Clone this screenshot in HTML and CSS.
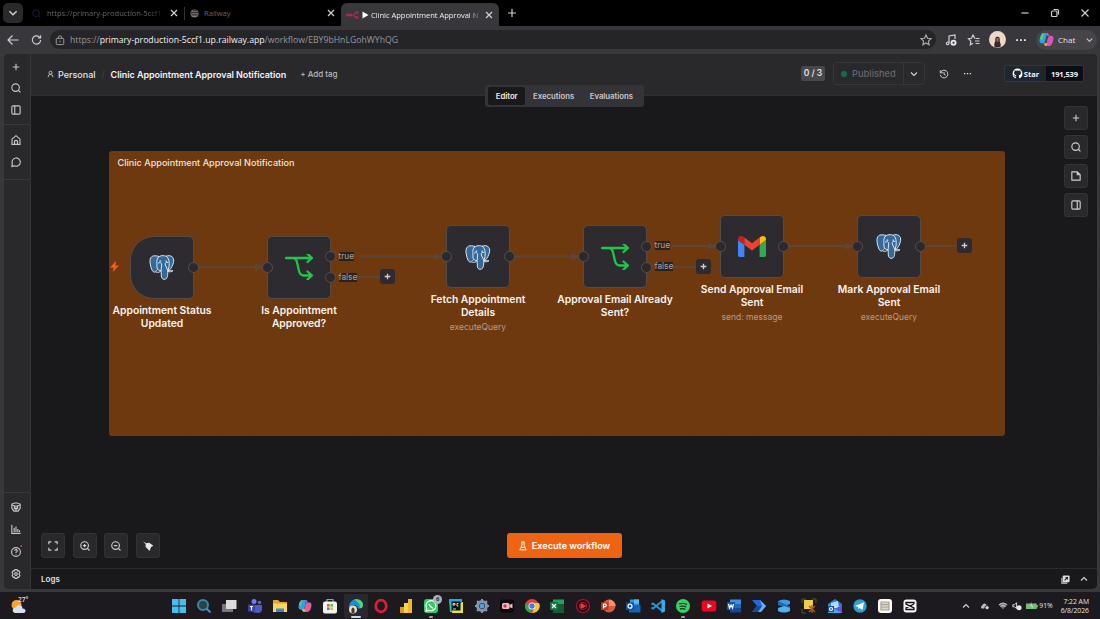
FILE: index.html
```
<!DOCTYPE html>
<html lang="en">
<head>
    <meta charset="UTF-8">
    <meta name="viewport" content="width=device-width, initial-scale=1.0">
    <title>Clinic Appointment Approval Notification</title>
    <link rel="stylesheet" href="styles.css">
</head>
<body>
    <svg class="defs" aria-hidden="true">
        <symbol id="close" viewBox="0 0 10 10"><path d="M2 2l6 6M8 2l-6 6"/></symbol>
        <symbol id="plus" viewBox="0 0 10 10"><path d="M5 1v8M1 5h8"/></symbol>
        <symbol id="down" viewBox="0 0 10 10"><path d="M2 3.5l3 3 3-3"/></symbol>
        <symbol id="search" viewBox="0 0 12 12"><circle cx="5.5" cy="5.5" r="4.500"/><path d="M8.700 8.700l2.600 2.600"/></symbol>
        <symbol id="panel" viewBox="0 0 12 12"><rect x="1" y="1" width="10" height="10" rx="1.5"/><path d="M4.5 1v10"/></symbol>
        <symbol id="dots" viewBox="0 0 12 12"><path class="solid" d="M1.2 5.2h1.8v1.7H1.2zM5.1 5.2h1.8v1.7H5.1zM9 5.2h1.8v1.7H9z"/></symbol>
        <symbol id="postgres" viewBox="0 0 26 26">
            <g fill="#35699b" stroke="#dbe5ec" stroke-width="1" stroke-linejoin="round" stroke-linecap="round">
                <path d="M8 2C3 .8.6 3.500 1 8c.3 3.600 1.500 8.300 3.300 9.800 1.600 1.300 3.300-1.200 4.700-2.800l2-12z"/>
                <path d="M17 2.200C22 .3 25.300 3.300 24.600 7.500c-.6 3.600-2.400 7-4.600 9l-4-1z"/>
                <path d="M9.500 3C12 1 17 1 18.800 3.800c1.800 2.800 2 8.200.3 12.200-.7 3.500.2 8-2.700 9.100-2.300.8-3.900-.4-4.100-3.200l-.2-5.300c-2.700.3-4.400-1.500-4.200-4.600C8 9 7 5.500 9.500 3z"/>
                <path fill="none" d="M9.300 9c2-1 3.500-.2 3.400 2l-.6 5.600c-1 1.800-3 2-5.100 1.500M19 8.500c-1.800-.8-3.200.2-2.700 2.500l2.600 5.500M18.600 17.300c2 .9 4 .7 5.400-.6-1.400.2-3 .1-4.400-.7"/>
                <path stroke-width="1.200" d="M11 7.200h.7M17 7.200h.5"/>
            </g>
        </symbol>
        <symbol id="branch" viewBox="0 0 28 26"><path d="M1 4h26M22.500 0l4.500 4-4.500 4M7.500 4c3.500 0 4.300 2.500 5.200 7C13.800 17 14.500 21.500 19 21.500h8M22.500 17.500l4.500 4-4.500 4"/></symbol>
    </svg>

    <div class="tabs">
        <button class="tab-menu"><svg><use href="#down"/></svg></button>
        <div class="tab tab-first">
            <svg class="favicon search-blue"><use href="#search"/></svg>
            <span class="tab-title">https://primary-production-5ccf1.</span>
            <svg class="close"><use href="#close"/></svg>
        </div>
        <div class="tab tab-second">
            <svg class="favicon" viewBox="0 0 10 10"><circle cx="5" cy="5" r="4.500" fill="#77777a" stroke="none"/><path d="M1 4h8M1.500 6.500h7M3 2h5" stroke="#333"/></svg>
            <span class="tab-title">Railway</span>
            <svg class="close"><use href="#close"/></svg>
        </div>
        <div class="tab tab-active">
            <svg class="favicon n8n" viewBox="0 0 13 10"><path d="M1 5h6c2 0 1-2.500 3-2.500M7 5c2 0 1 2.500 3 2.500"/><circle cx="1.600" cy="5" r="1"/><circle cx="4.600" cy="5" r="1"/><circle cx="11" cy="2.500" r="1"/><circle cx="11" cy="7.500" r="1"/></svg>
            <svg class="play" viewBox="0 0 7 8"><path d="M.5.5v7L6.500 4z"/></svg>
            <span class="tab-title">Clinic Appointment Approval N</span>
            <svg class="close"><use href="#close"/></svg>
        </div>
        <svg class="new-tab"><use href="#plus"/></svg>
        <div class="window-buttons">
            <svg viewBox="0 0 10 10"><path d="M1.500 5h7"/></svg>
            <svg viewBox="0 0 10 10"><rect x="1.500" y="3" width="5.500" height="5.500" rx="1"/><path d="M3.500 1.500h3.700q1.300 0 1.300 1.300v3.700"/></svg>
            <svg viewBox="0 0 10 10"><path d="M1.500 1.500l7 7M8.500 1.500l-7 7"/></svg>
        </div>
    </div>

    <div class="toolbar">
        <svg class="back" viewBox="0 0 12 12"><path d="M11.500 6H1M5.500 1.500L1 6l4.500 4.500"/></svg>
        <svg class="reload" viewBox="0 0 12 12"><path d="M10.500 6a4.500 4.500 0 1 1-1.500-3.400l1.300 1.200M10.500.8v3H7.500"/></svg>
        <div class="address">
            <svg class="lock" viewBox="0 0 12 12"><rect x="1.500" y="4" width="9" height="7.500" rx="1"/><path d="M4 4V2.500q0-1.500 2-1.500t2 1.500V4M6 6.800v2"/></svg>
            <span class="url">https://<b>primary-production-5ccf1.up.railway.app</b>/workflow/EBY9bHnLGohWYhQG</span>
            <svg class="star" viewBox="0 0 12 12"><path d="M6 1l1.500 3.300 3.500.4-2.600 2.400.7 3.600L6 8.900l-3.100 1.800.7-3.600L1 4.700l3.500-.4z"/></svg>
        </div>
        <svg class="tool media" viewBox="0 0 12 12"><path d="M4 9V2l6-1v4"/><circle cx="2.700" cy="9.300" r="1.300"/><circle cx="8.500" cy="8.700" r="3" class="solid"/><path stroke="#38373b" d="M7.500 8.700h2M8.500 7.700v2"/></svg>
        <svg class="tool" viewBox="0 0 12 12"><path d="M7.500 4.500L6.800 4.300 5 1 3.500 4.300.5 4.700l2.300 2.400-.5 3.700L5 9.200M8 4.500h3.500M7 7h4.500M7.500 9.500h4"/></svg>
        <svg class="avatar" viewBox="0 0 17 17"><circle cx="8.500" cy="8.500" r="8.500" fill="#ead9c6"/><path fill="#3b2826" d="M5.500 16c-.5-3 0-4.500.8-6V7.500c.2-2.500 4.400-2.500 4.400 0v2c0 2 1.500 3.500 1 6q-3 1.800-6.200.5z"/><path fill="#a76a52" d="M7.500 7h2v3.500h-2z"/></svg>
        <svg class="tool"><use href="#dots"/></svg>
        <div class="chat">
            <svg class="copilot" viewBox="0 0 16 16"><path fill="#23a6e8" d="M5.500 1h4C8 2 7.500 6 6.500 9.500S4.500 12 3 12C0 12 0 9 1.500 5S4 1 5.500 1z"/><path fill="#57cf78" d="M1 7c1-3 2-6 4.500-6L3.500 9z"/><path fill="#df53b8" d="M10.500 15h-4c1.500-1 2-5 3-8.500S11.500 4 13 4c3 0 3 3 1.500 7S12 15 10.500 15z"/><path fill="#f3a351" d="M5 12h4l-1 3c-2 0-2.500-1.500-3-3z"/><path fill="#9c67ef" d="M8.500 1c2 0 2 1.500 2.500 3h-3z"/></svg>
            <span>Chat</span>
            <svg class="chat-arrow"><use href="#down"/></svg>
        </div>
    </div>

    <div class="page">
        <aside class="sidebar">
            <div class="side-group">
                <svg class="side-plus"><use href="#plus"/></svg>
                <svg><use href="#search"/></svg>
                <svg><use href="#panel"/></svg>
            </div>
            <div class="side-group side-nav">
                <svg viewBox="0 0 12 12"><path d="M1.200 5L6 .8 10.800 5v6.200H1.200zM4.200 11.200V7.500q1.800-2 3.600 0v3.700"/></svg>
                <svg viewBox="0 0 12 12"><path d="M1 11.300l.6-3.300a5 5 0 1 1 2.400 2.600z"/></svg>
            </div>
            <div class="side-group side-bottom">
                <svg viewBox="0 0 12 12"><path d="M1 2.500L6 1l5 1.500v5.200L8.500 11h-5L1 7.700zM1 3.500L6 5l5-1.500M4 5v3h4V5M6 5v6"/></svg>
                <svg viewBox="0 0 12 12"><path d="M1 .8v10.500h10.500M3.800 4.500v5M6 3v6.500M8.200 6v3.500M10.200 7.500v2"/></svg>
                <svg viewBox="0 0 12 12"><circle cx="6" cy="6" r="5.300"/><path d="M4.500 4.700Q4.700 3 6.200 3.200 8 3.700 7.300 5.200L6 6.300v.8M6 8.700v.5"/><circle cx="12.300" cy="-1" r="1" fill="#e34b5c" stroke="none"/></svg>
                <svg viewBox="0 0 12 12"><path d="M4.800.7h2.400l.5 1.600 1.600-.3 1.400 2.200L9.600 6l1.100 1.800L9.300 10l-1.600-.3-.5 1.600H4.800l-.5-1.600-1.600.3-1.400-2.200L2.400 6 1.300 4.200 2.700 2l1.600.3z"/><circle cx="6" cy="6" r="1.600"/></svg>
            </div>
        </aside>

        <main>
            <header>
                <svg class="person" viewBox="0 0 10 10"><circle cx="5" cy="3.200" r="2.200"/><path d="M1.500 9.500q0-4 3.500-4t3.500 4"/></svg>
                <span class="project">Personal</span>
                <span class="slash">/</span>
                <span class="workflow-name">Clinic Appointment Approval Notification</span>
                <span class="add-tag">+ Add tag</span>
                <span class="count">0 / 3</span>
                <div class="publish">
                    <span class="published"><i></i>Published</span>
                    <svg><use href="#down"/></svg>
                </div>
                <svg class="history" viewBox="0 0 12 12"><path d="M1.500 1.500v3h3M1.800 4.200A4.600 4.600 0 1 1 1.500 7M6 3.500v3l2 .8"/></svg>
                <svg class="more"><use href="#dots"/></svg>
                <div class="github">
                    <span class="gh-star"><svg viewBox="0 0 16 16"><path d="M8 .7A7.400 7.400 0 0 0 5.700 15v-2.300c-2 .4-2.500-1-2.900-1.800l-.8-.7c.9-.3 1.600.7 1.900 1.100.6.900 1.500.6 1.900.4l.4-1C4.300 10.300 3 9.300 3 7c0-.8.3-1.500.8-2-.1-.7-.1-1.300.1-1.900.8 0 1.500.5 2 .8a8 8 0 0 1 4.200 0c.6-.4 1.200-.8 2-.8.2.6.3 1.200.1 1.900.5.500.8 1.200.8 2 0 2.300-1.300 3.300-3.200 3.700.4.400.5.900.5 1.700V15A7.400 7.400 0 0 0 8 .7z"/></svg>Star</span>
                    <span class="gh-count">191,539</span>
                </div>
            </header>

            <nav class="view-tabs">
                <span class="selected">Editor</span>
                <span>Executions</span>
                <span>Evaluations</span>
            </nav>

            <section class="canvas">
                <div class="sticky">Clinic Appointment Approval Notification</div>

                <svg class="wires" viewBox="30 96 1067 472">
                    <path d="M198 267h66M359 256.500h83M358 277h23M514 256.500h65M672 246h45M674 267h23M788 246h65M925 246h33"/>
                    <path class="arrow" d="M255 263.500l9 3.500-9 3.500zM434 253l9 3.500-9 3.500zM571 253l9 3.500-9 3.500zM708 242.500l9 3.500-9 3.500zM845 242.500l9 3.500-9 3.500z"/>
                </svg>

                <svg class="bolt" viewBox="0 0 10 12"><path d="M6.500 0L0 7h4l-1 5 7-7H6z"/></svg>

                <div class="node trigger n1">
                    <div class="box"><svg class="pg"><use href="#postgres"/></svg><i class="port out"></i></div>
                    <p>Appointment Status<br>Updated</p>
                </div>
                <div class="node n2">
                    <div class="box"><svg class="if"><use href="#branch"/></svg><i class="port in"></i><i class="port yes"></i><i class="port no"></i><span class="tag yes">true</span><span class="tag no">false</span></div>
                    <p>Is Appointment<br>Approved?</p>
                </div>
                <div class="node n3">
                    <div class="box"><svg class="pg"><use href="#postgres"/></svg><i class="port in"></i><i class="port out"></i></div>
                    <p>Fetch Appointment<br>Details</p>
                    <small>executeQuery</small>
                </div>
                <div class="node n4">
                    <div class="box"><svg class="if"><use href="#branch"/></svg><i class="port in"></i><i class="port yes"></i><i class="port no"></i><span class="tag yes">true</span><span class="tag no">false</span></div>
                    <p>Approval Email Already<br>Sent?</p>
                </div>
                <div class="node n5">
                    <div class="box">
                        <svg class="gmail" viewBox="0 0 28 21"><path fill="#4285f4" d="M0 4l6.400 4.800V21H2q-2 0-2-2z"/><path fill="#34a853" d="M28 4l-6.400 4.800V21H26q2 0 2-2z"/><path fill="#c5221f" d="M0 3c0-3 3.200-3.800 5.200-2.300l1.200.9v7.200L0 4z"/><path fill="#fbbc04" d="M28 3c0-3-3.200-3.800-5.200-2.300l-1.200.9v7.200L28 4z"/><path fill="#ea4335" d="M6.400 8.800V1.600L14 7.300l7.600-5.700v7.200L14 14.500z"/></svg>
                        <i class="port in"></i><i class="port out"></i>
                    </div>
                    <p>Send Approval Email<br>Sent</p>
                    <small>send: message</small>
                </div>
                <div class="node n6">
                    <div class="box"><svg class="pg"><use href="#postgres"/></svg><i class="port in"></i><i class="port out"></i></div>
                    <p>Mark Approval Email<br>Sent</p>
                    <small>executeQuery</small>
                </div>

                <span class="add add1"><svg><use href="#plus"/></svg></span>
                <span class="add add2"><svg><use href="#plus"/></svg></span>
                <span class="add add3"><svg><use href="#plus"/></svg></span>

                <div class="canvas-tools">
                    <button><svg class="small"><use href="#plus"/></svg></button>
                    <button><svg><use href="#search"/></svg></button>
                    <button><svg viewBox="0 0 12 12"><path d="M1 1h6.500L11 4.500V11H1zM7.500 1v3.500H11"/></svg></button>
                    <button><svg class="flip"><use href="#panel"/></svg></button>
                </div>

                <div class="zoom-tools">
                    <button><svg viewBox="0 0 12 12"><path d="M1 4V1h3M8 1h3v3M11 8v3H8M4 11H1V8"/></svg></button>
                    <button><svg viewBox="0 0 12 12"><circle cx="5.500" cy="5.500" r="4.600"/><path d="M8.800 8.800l2.600 2.600M3.500 5.500h4M5.500 3.500v4"/></svg></button>
                    <button><svg viewBox="0 0 12 12"><circle cx="5.500" cy="5.500" r="4.600"/><path d="M8.800 8.800l2.600 2.600M3.500 5.500h4"/></svg></button>
                    <button><svg viewBox="0 0 12 12"><path class="solid" d="M0 .3l3.700 2.300L7.500 2 12.500 5.800 9.800 7.200 7.800 12 3 6.800 3.200 4z"/></svg></button>
                </div>

                <button class="execute"><svg viewBox="0 0 10 12"><path d="M3.700 1v4L1 10.800h8L6.300 5V1M2.800 1h4.400M2.500 7.800h5"/></svg>Execute workflow</button>
            </section>

            <footer>
                <span>Logs</span>
                <svg class="popout" viewBox="0 0 10 10"><path fill="#dddddf" stroke="none" d="M3 .5h5.500q1 0 1 1V7q0 1-1 1H3Q2 8 2 7V1.500q0-1 1-1z"/><path d="M1 3v6h6"/><path stroke="#222" d="M4 6l3-3M5 2.800h2.200V5"/></svg>
                <svg class="up"><use href="#down"/></svg>
            </footer>
        </main>
    </div>

    <div class="taskbar">
        <div class="weather">
            <svg viewBox="0 0 16 16"><circle cx="5.500" cy="7" r="5" fill="#f4a62c"/><path fill="#d2e2f5" d="M4 15q-3-1-2-4 1-2 3-1.500Q7 6 10 7.500q1.500 1 1.500 3 3 0 3 2.500 0 2-2 2z"/></svg>
            <span>27°</span>
        </div>
        <div class="apps">
            <svg viewBox="0 0 16 16"><path fill="#48bdf0" d="M1 1h6.600v6.600H1zM8.400 1H15v6.600H8.400zM1 8.400h6.600V15H1zM8.400 8.400H15V15H8.400z"/></svg>
            <svg viewBox="0 0 16 16"><circle cx="7" cy="7" r="5" fill="#24463f" stroke="#3c85ad" stroke-width="2"/><path d="M10.500 10.500l4 4" stroke="#3a94cf" stroke-width="2"/></svg>
            <svg viewBox="0 0 16 16"><path fill="#77777a" d="M1 6h11v8H1z"/><path fill="#dcdcdf" d="M5 2h10.500v9H5z"/></svg>
            <svg viewBox="0 0 16 16"><circle cx="7" cy="3.500" r="2.500" fill="#7479ee"/><circle cx="12.500" cy="4.500" r="1.800" fill="#5a60cf"/><path fill="#5158cc" d="M4 7h11v5q-1 3-4 3-6 0-7-3z"/><path fill="#3b3fae" d="M1 6.500h7v7H1z"/><path d="M3 8.500h3M4.500 8.500v4" stroke="#fff"/></svg>
            <svg viewBox="0 0 16 16"><path fill="#e4a526" d="M1 2h5l2 2h7v4H1z"/><path fill="#ffd45b" d="M1 5.500h14V14H1z"/><path fill="#318bcf" d="M4 10.500h8V14H4z"/></svg>
            <svg viewBox="0 0 16 16"><path fill="#2aa4e4" d="M5.500 2h4L7 11.500H3C0 11.500 2 2 5.500 2z"/><path fill="#55c878" d="M1.800 7C2.500 4 3.500 2 5.500 2L4 8z"/><path fill="#e35d9d" d="M10.500 14h-4L9 4.500h4C16 4.500 14 14 10.500 14z"/><path fill="#efae45" d="M4.500 11h4l-1 3c-2 0-2-1-3-3z"/><path fill="#8060df" d="M8.500 2c2 0 2 1 2.500 2.500H8z"/></svg>
            <svg viewBox="0 0 16 16"><path d="M5 4V1.500h6V4" fill="none" stroke="#55b7e7" stroke-width="1.200"/><rect x="1" y="3.500" width="14" height="12" rx="2" fill="#f2f2ee"/><path fill="#e45a32" d="M5 6h2.600v2.600H5z"/><path fill="#73b640" d="M8.400 6H11v2.600H8.400z"/><path fill="#298edb" d="M5 9.400h2.600V12H5z"/><path fill="#efb728" d="M8.400 9.400H11V12H8.400z"/></svg>
            <span class="running edge"><svg viewBox="0 0 16 16"><path fill="#168dd6" d="M1 9C1-1 15-1 15 7q0 4-5 3.500Q9 7 6.500 7 3 7 3 11q1 3 4 4Q1 14 1 9z"/><path fill="#55d56e" d="M6 1.500C11 .5 15 3 15 7q0 3-3.500 3.500Q13 5 6 1.500z"/><circle cx="5" cy="11.500" r="4" fill="#ead9c6"/><path fill="#463535" d="M3.500 15v-4q1.500-3 3 0v4z"/></svg></span>
            <svg viewBox="0 0 16 16"><ellipse cx="8" cy="8" rx="5.300" ry="5.800" fill="none" stroke="#df1d39" stroke-width="2.700"/></svg>
            <svg viewBox="0 0 16 16"><path fill="#efb824" d="M10 1h4v14h-4z"/><path fill="#f9d257" d="M6 5h4v10H6z"/><path fill="#d99d16" d="M2 9h4v6H2z"/></svg>
            <span class="running dot"><svg viewBox="0 0 16 16"><rect x="1" y="1" width="14" height="14" rx="3" fill="#28cf62"/><path d="M3 13l.7-2.600A5 5 0 1 1 6 12.300z" fill="none" stroke="#fff" stroke-width="1.300"/><path d="M6 6q1 3 4 4" stroke="#fff" stroke-width="1.500"/></svg><b class="badge">6</b></span>
            <svg viewBox="0 0 16 16"><path fill="#26cba0" d="M1 1h10L9 14H2z"/><path fill="#dce34b" d="M5 4h10v11H4z"/><path fill="#29a6dc" d="M1 1h13v4H1z"/><path fill="#111" d="M3.500 3.500h9v9h-9z"/><path d="M5 7.500v-2h2v1.500H5M10.500 5.500H9V8h1.500M5 11h3" stroke="#fff" stroke-width=".8" fill="none"/></svg>
            <svg viewBox="0 0 16 16"><circle cx="8" cy="8" r="4.500" fill="none" stroke="#8796a7" stroke-width="3"/><path d="M8 1v2M8 13v2M1 8h2M13 8h2M3 3l1.500 1.500M11.500 11.500L13 13M13 3l-1.500 1.500M4.500 11.500L3 13" stroke="#8796a7" stroke-width="2"/><circle cx="8" cy="8" r="2.500" fill="#4b9fe5"/></svg>
            <svg viewBox="0 0 16 16"><rect x="1" y="1.500" width="14" height="13" rx="3" fill="#090709"/><rect x="3" y="5" width="7.500" height="6" rx="1.500" fill="#f2b7c4"/><path fill="#f2b7c4" d="M10.500 7l3-1.500v5l-3-1.500z"/><circle cx="6" cy="8" r="1.700" fill="#c43556"/></svg>
            <svg viewBox="0 0 16 16"><circle cx="8" cy="8" r="7" fill="#e34133"/><path fill="#2fa856" d="M2 4.500l4.500 7L8 15A7 7 0 0 1 2 4.500z"/><path fill="#f8c72e" d="M8 15l3.500-7-.8-3H15A7 7 0 0 1 8 15z"/><circle cx="8" cy="8" r="3.500" fill="#fff"/><circle cx="8" cy="8" r="2.700" fill="#3c7ee5"/></svg>
            <svg viewBox="0 0 16 16"><path fill="#21a365" d="M4 1.500h11v13H4z"/><path fill="#155b39" d="M9 6h6v8.500H4v-4z"/><path fill="#12743e" d="M1 4h8v8H1z"/><path d="M3 6l4 4M7 6l-4 4" stroke="#fff" stroke-width="1.300"/></svg>
            <svg viewBox="0 0 16 16"><circle cx="8" cy="8" r="6.500" fill="#28030a" stroke="#a51a32"/><circle cx="8" cy="8" r="3.500" fill="none" stroke="#9b1830"/><path d="M7 6v4l3-2zM6 6v4" stroke="#ed3650" fill="#ed3650"/></svg>
            <svg viewBox="0 0 16 16"><circle cx="9" cy="8" r="6.500" fill="#dc593a"/><path fill="#f59172" d="M9 1.500A6.500 6.500 0 0 1 15.500 8H9z"/><path fill="#b93820" d="M1 4.500h7.500V12H1z"/><path d="M3.500 10.500V6h2q1.500 1.300 0 2.700h-2" fill="none" stroke="#fff"/></svg>
            <svg viewBox="0 0 16 16"><path fill="#2797e5" d="M5 1.500h9v8H5z"/><path fill="#57bbef" d="M9 1.500h5v4H9z"/><path fill="#1565b5" d="M4 7h11.500v7.500H4z"/><path fill="#0e519d" d="M1 4.500h8V12H1z"/><circle cx="5" cy="8.200" r="2" fill="none" stroke="#fff"/></svg>
            <svg viewBox="0 0 16 16"><path d="M13 2.500L3 10.500l-1.500-1M13 13.500L3 5.500l-1.500 1" fill="none" stroke="#2b91d5" stroke-width="2"/><path fill="#3ba9ed" d="M11.500 1l3.500 1.500v11L11.500 15z"/></svg>
            <span class="running dot"><svg viewBox="0 0 16 16"><circle cx="8" cy="8" r="7" fill="#35d268"/><path d="M4 6q4-1.500 8 .5M4.500 8.500q3.500-1 6.700.3M5 11q3-.7 5.300.3" fill="none" stroke="#163b22" stroke-width="1.300"/></svg></span>
            <svg viewBox="0 0 16 16"><rect x=".7" y="2.500" width="14.600" height="11" rx="2.500" fill="#ed071e"/><path fill="#fff" d="M6.500 5.500v5L11 8z"/></svg>
            <svg viewBox="0 0 16 16"><path fill="#3f91dc" d="M4 1.500h11v5H4z"/><path fill="#2169be" d="M4 6h11v4H4z"/><path fill="#164694" d="M4 10h11v4.500H4z"/><path fill="#1553a9" d="M1 4h8v8H1z"/><path d="M2.500 6l1 4L5 7l1.500 3 1-4" fill="none" stroke="#fff"/></svg>
            <svg viewBox="0 0 16 16"><path fill="#2368d6" d="M1 2h8l6 6-5 6H1l5-6z"/><path fill="#68adf4" d="M9 2l6 6-5 6H7l4-6z"/><path fill="#164ca8" d="M1 14l5-6h5l-4 6z"/></svg>
            <svg viewBox="0 0 16 16"><path fill="#3c9aeb" d="M2 3q6-3 12 0v3L8 8.500 2 7z"/><path fill="#1968bb" d="M2 3l12 5.500V11L2 6.500z"/><path fill="#53b2ee" d="M2 10l6-2 6 2v3q-6 3-12 0z"/></svg>
            <svg viewBox="0 0 16 16"><path fill="#f1cb4b" d="M3 2h9v9H3z"/><path d="M1 5V1h4M11 1h4v4M5 15H1v-4" fill="none" stroke="#405f3d" stroke-width="1"/><path d="M8 8l6 6M14 8l-6 6M11 7v8" stroke="#a85b25" stroke-width="1.400"/></svg>
            <svg viewBox="0 0 16 16"><path fill="#2482d7" d="M1 6l7-5 7 5v9H1z"/><path fill="#b6daf5" d="M4 5l7-2 1 7H4z"/><path fill="#44a9ec" d="M1 7l7 4 7-4v8H1z"/><path fill="#6a4fd3" d="M8 11l7-4v8z"/><path fill="#164e9b" d="M1 8h6v6H1z"/><circle cx="4" cy="11" r="1.500" fill="none" stroke="#fff"/></svg>
            <svg viewBox="0 0 16 16"><circle cx="8" cy="8" r="6.700" fill="#2ba1d8"/><path fill="#fff" d="M3 8l9-3.700L10.500 12 7.600 9.900 6.200 11 6 9z"/></svg>
            <svg viewBox="0 0 16 16"><rect x="1" y="1" width="14" height="14" rx="3" fill="#fbfaf7"/><path d="M4 4h8v8H4zM4 6.500h8M4 9h8" fill="#ddd6c9" stroke="#a6a092"/></svg>
            <svg viewBox="0 0 16 16"><rect x="1.500" y="1.500" width="13" height="13" rx="3" fill="#f6f6f6"/><path d="M12 6V4.500H4V6l8 4v1.500H4V10l8-4" fill="none" stroke="#111" stroke-width="1.300"/></svg>
        </div>
        <div class="tray">
            <svg class="up"><use href="#down"/></svg>
            <svg class="cloud" viewBox="0 0 12 12"><path fill="#bbb" d="M2 9Q0 7 2.500 5.500 4 2 7 3.500 9 4.500 8 7L5 9z" stroke="none"/><circle cx="8.500" cy="8" r="2.500" fill="#ddd" stroke="#1c1a1e"/></svg>
            <svg class="wifi" viewBox="0 0 12 12"><path fill="#777" d="M1 4.500q5-4 10 0L6 10z" stroke="none"/><path d="M1 4.500q5-4 10 0M3 6.500q3-2.500 6 0"/></svg>
            <svg class="sound" viewBox="0 0 12 12"><path d="M1 4.500h2L5.500 2v7L3 7H1z"/><circle cx="8.500" cy="8" r="3" class="solid"/></svg>
            <svg class="battery" viewBox="0 0 14 10"><path fill="#74bd78" d="M0 2h12.500v6.500H0zM12.500 4h1.500v2.500h-1.500z"/><path fill="#d6ecd6" d="M6 0l-1 5h3L7 8"/></svg>
            <span class="percent">91%</span>
            <div class="clock">7:22 AM<br>6/8/2026</div>
        </div>
    </div>
</body>
</html>
```
FILE: styles.css
```
* {
    box-sizing: border-box;
}

body {
    margin: 0;
    width: 1100px;
    height: 619px;
    overflow: hidden;
    display: flex;
    flex-direction: column;
    background-color: #38373b;
    color: #e4e3e6;
    font-family: Inter, sans-serif;
    font-size: 9px;
}

svg {
    display: block;
    flex: none;
    width: 10px;
    height: 10px;
    fill: none;
    stroke: #d0cfd2;
    stroke-width: 1.2;
    overflow: visible;
}

.defs {
    position: absolute;
    width: 0;
    height: 0;
}

.solid {
    fill: #e6e6e9;
    stroke: none;
}

button {
    display: flex;
    align-items: center;
    justify-content: center;
    padding: 0;
    border: none;
    font-family: inherit;
}

/* browser */
.tabs {
    height: 26px;
    flex: none;
    display: flex;
    align-items: center;
    background-color: #000;
    font-family: "Open Sans", sans-serif;
    font-size: 7.600px;
}

.tab-menu {
    width: 20px;
    height: 20px;
    margin-left: 3px;
    border-radius: 5px;
    background-color: #29282b;
}

.tab-menu svg {
    width: 12px;
    height: 12px;
}

.tab {
    display: flex;
    align-items: center;
    height: 23px;
    color: #66666a;
}

.tab-title {
    flex: 1;
    white-space: nowrap;
}

.tab-first {
    width: 161px;
    padding: 0 5px 0 9px;
}

.tab-first .tab-title {
    margin: 0 3px 0 6px;
    letter-spacing: -0.05px;
    -webkit-mask-image: linear-gradient(90deg, #000 85%, transparent);
    mask-image: linear-gradient(90deg, #000 85%, transparent);
}

.tab-second {
    width: 157px;
    padding: 0 5px 0 6px;
    position: relative;
}

.tab-second::before {
    content: "";
    position: absolute;
    left: 0;
    width: 1px;
    height: 13px;
    background-color: #343436;
}

.tab-second .tab-title {
    margin-left: 5px;
}

.tab-active {
    width: 158px;
    align-self: flex-end;
    padding: 0 5px 0 5px;
    color: #eeeef0;
    border-radius: 6px 6px 0 0;
    background-color: #38373b;
}

.tab-active .tab-title {
    margin: 0 2px 0 2px;
    letter-spacing: -0.05px;
    -webkit-mask-image: linear-gradient(90deg, #000 88%, transparent);
    mask-image: linear-gradient(90deg, #000 88%, transparent);
}

.favicon {
    width: 9px;
    height: 9px;
}

.search-blue {
    stroke: #17244c;
}

.n8n {
    width: 13px;
    height: 10px;
    stroke: #ad2d56;
}

.play {
    width: 7px;
    height: 8px;
    margin-left: 3px;
    fill: #fff;
    stroke: none;
}

.new-tab {
    margin-left: 8px;
}

.window-buttons {
    display: flex;
    gap: 20px;
    margin-left: auto;
    padding-right: 10px;
}

.toolbar {
    height: 28px;
    flex: none;
    display: flex;
    align-items: center;
    padding: 0 0 1px 7px;
    font-family: "Open Sans", sans-serif;
}

.back, .reload, .tool {
    width: 12px;
    height: 12px;
}

.reload {
    width: 11px;
    margin-left: 12px;
}

.address {
    width: 886px;
    height: 19px;
    display: flex;
    align-items: center;
    margin: 0 9px 0 8px;
    padding: 0 4px 0 5px;
    border-radius: 10px;
    background-color: #252427;
}

.lock {
    stroke: #99989c;
}

.url {
    flex: 1;
    margin-left: 5px;
    color: #99989c;
    font-size: 8.700px;
    white-space: nowrap;
}

.url b {
    color: #f2f1f4;
    font-weight: 400;
}

.star {
    width: 12px;
    height: 12px;
    stroke: #a9a8ac;
}

.media {
    margin-right: 11px;
}

.avatar {
    width: 17px;
    height: 17px;
    margin: 0 9px 0 9px;
    stroke: none;
}

.chat {
    width: 61px;
    height: 20px;
    display: flex;
    align-items: center;
    margin-left: 9px;
    padding: 0 3px;
    border-radius: 10px;
    background-color: #454448;
    font-size: 8px;
}

.copilot {
    width: 15px;
    height: 15px;
    margin-right: 4px;
    stroke: none;
}

.chat-arrow {
    width: 9px;
    margin-left: auto;
}

/* editor */
.page {
    width: 1093px;
    height: 535px;
    flex: none;
    display: flex;
    margin-left: 4px;
    overflow: hidden;
    border-radius: 5px;
    background-color: #19181b;
}

.sidebar {
    width: 27px;
    flex: none;
    display: flex;
    flex-direction: column;
    border-right: 1px solid #363539;
    background-color: #29282b;
}

.side-group {
    display: flex;
    flex-direction: column;
    align-items: center;
    gap: 11.3px;
    padding: 8px 2px 9px 0;
    border-bottom: 1px solid #3a393d;
}

.side-group svg {
    stroke: #c6c5c8;
    stroke-width: 1.350;
}

.side-group .side-plus {
    width: 8px;
    height: 10px;
}

.side-nav {
    gap: 12px;
    padding: 10.500px 2px 12px 0;
}

.side-bottom {
    gap: 12.300px;
    margin-top: auto;
    padding: 9px 2px 10px 0;
    border-top: 1px solid #3a393d;
    border-bottom: none;
}

main {
    flex: 1;
    position: relative;
    display: flex;
    flex-direction: column;
}

header {
    height: 42px;
    flex: none;
    display: flex;
    align-items: center;
    padding: 0 13px 2px 16px;
    border-bottom: 1px solid #302f32;
    background-color: #29282b;
}

.person {
    width: 7px;
    height: 8px;
    margin-right: 4px;
}

.project, .workflow-name {
    position: relative;
    top: 0.500px;
    font-size: 9px;
    font-weight: 600;
    letter-spacing: -0.05px;
    white-space: nowrap;
}

.project {
    font-weight: 500;
    letter-spacing: 0;
}

.slash {
    width: 15px;
    text-align: center;
    color: #454449;
}

.workflow-name {
    color: #f2f1f4;
}

.add-tag {
    margin-left: 14px;
    font-size: 8px;
    font-weight: 500;
    color: #bbbabd;
}

.count {
    width: 24px;
    margin-left: auto;
    border-radius: 2px;
    background-color: #48474b;
    font-size: 8.500px;
    font-weight: 600;
    line-height: 15px;
    text-align: center;
}

.publish {
    width: 92px;
    height: 23px;
    display: flex;
    align-items: center;
    margin: 0 14px 0 8px;
    border: 1px solid #363539;
    border-radius: 3px;
}

.publish svg {
    margin: auto;
}

.published {
    width: 70px;
    height: 21px;
    display: flex;
    align-items: center;
    border-right: 1px solid #363539;
    color: #67666a;
    font-size: 9.300px;
    font-weight: 500;
}

.published i {
    width: 6px;
    height: 6px;
    margin: 0 5px 0 7px;
    border-radius: 50%;
    background-color: #176a4c;
}

.more {
    width: 9px;
    height: 9px;
    margin: 0 32px 0 14px;
}

.github {
    display: flex;
    height: 17px;
    border: 1px solid #303744;
    border-radius: 2px;
    overflow: hidden;
    color: #f2f4f8;
    font-family: "Open Sans", sans-serif;
    font-size: 7.500px;
    font-weight: 700;
}

.gh-star, .gh-count {
    display: flex;
    align-items: center;
    justify-content: center;
}

.gh-star {
    width: 41px;
    gap: 1px;
    background-color: #202630;
}

.gh-star svg {
    width: 11px;
    height: 11px;
    fill: #fff;
    stroke: none;
}

.gh-count {
    width: 37px;
    letter-spacing: -0.15px;
    background-color: #0b0e17;
}

.view-tabs {
    position: absolute;
    z-index: 2;
    top: 31px;
    left: 454px;
    width: 159px;
    height: 22px;
    display: flex;
    align-items: center;
    padding: 1px 3px 2px;
    border-radius: 3px;
    background-color: #343337;
    font-size: 7.750px;
    font-weight: 600;
    color: #c9c8cb;
}

.view-tabs span {
    padding: 0 7.700px;
    line-height: 18px;
}

.view-tabs .selected {
    border-radius: 2px;
    background-color: #19181b;
    color: #eeedf0;
}

.canvas {
    flex: 1;
    position: relative;
    background-image: radial-gradient(circle, #222124 0.6px, transparent 0.8px);
    background-size: 10.5px 10.5px;
}

.sticky {
    position: absolute;
    left: 78px;
    top: 55px;
    width: 896px;
    height: 285px;
    padding: 6px 8.500px;
    border-radius: 3px;
    background-color: #6f390f;
    color: #f0e4da;
    font-size: 9.100px;
    font-weight: 500;
}

.wires {
    position: absolute;
    left: -1px;
    top: 0;
    width: 1067px;
    height: 472px;
    stroke: #5d4638;
    stroke-width: 2;
}

.wires .arrow {
    fill: #5d4638;
    stroke: none;
}

.bolt {
    position: absolute;
    left: 79px;
    top: 165px;
    width: 9px;
    height: 11px;
    fill: #ff5a18;
    stroke: none;
}

.node {
    position: absolute;
    width: 130px;
    display: flex;
    flex-direction: column;
    align-items: center;
    text-align: center;
}

.n1 { left: 66px; top: 139.500px; }
.n2 { left: 203px; top: 139.500px; }
.n3 { left: 382px; top: 129px; }
.n4 { left: 519px; top: 129px; }
.n5 { left: 656px; top: 118.500px; }
.n6 { left: 793px; top: 118.500px; }

.box {
    position: relative;
    width: 64px;
    height: 63px;
    display: flex;
    align-items: center;
    justify-content: center;
    border: 1px solid #544c48;
    border-radius: 5px;
    background-color: #2d2b2f;
}

.trigger .box {
    border-radius: 24px 5px 5px 24px;
}

.node p {
    margin: 5px 0 0;
    color: #f8f3ee;
    font-size: 10.350px;
    font-weight: 600;
    line-height: 13px;
    letter-spacing: -0.030px;
    white-space: nowrap;
}

.node small {
    margin-top: 3px;
    color: #b49c8b;
    font-size: 8.500px;
    line-height: 10px;
}

.pg {
    width: 26px;
    height: 26px;
}

.if {
    width: 28px;
    height: 26px;
    stroke: #1fc64d;
    stroke-width: 2.300;
    stroke-linecap: round;
    stroke-linejoin: round;
}

.gmail {
    width: 28px;
    height: 21px;
    stroke: none;
}

.port {
    position: absolute;
    top: 25px;
    width: 11px;
    height: 11px;
    border: 1px solid #57504d;
    border-radius: 50%;
    background-color: #2b292d;
}

.port.in { left: -6px; }
.port.out, .port.yes, .port.no { right: -6px; }
.port.yes { top: 14.500px; }
.port.no { top: 35.500px; }

.tag {
    position: absolute;
    left: 70.500px;
    color: #aaa5a3;
    background-color: #29221f;
    font-size: 8.300px;
    line-height: 9px;
}

.tag.yes { top: 15px; }
.tag.no { top: 36px; }

.add {
    position: absolute;
    width: 15px;
    height: 15px;
    display: flex;
    align-items: center;
    justify-content: center;
    border-radius: 3px;
    background-color: #2d2b2f;
}

.add svg {
    width: 7px;
    height: 7px;
    stroke-width: 1.900;
}

.add1 { left: 349px; top: 173px; }
.add2 { left: 665px; top: 163px; }
.add3 { left: 926px; top: 142px; }

.canvas-tools {
    position: absolute;
    right: 9px;
    top: 10px;
    display: flex;
    flex-direction: column;
    gap: 5px;
}

.canvas-tools button, .zoom-tools button {
    width: 24px;
    height: 24px;
    border: 1px solid #333236;
    border-radius: 3px;
    background-color: #29282b;
}

.canvas-tools svg, .zoom-tools svg {
    stroke-width: 1.350;
}

.canvas-tools .small {
    width: 8px;
    height: 8px;
}

.flip {
    transform: scaleX(-1);
}

.zoom-tools {
    position: absolute;
    left: 10px;
    top: 437px;
    display: flex;
    gap: 7.700px;
}

.zoom-tools button {
    height: 25px;
}

.execute {
    position: absolute;
    left: 476px;
    top: 437px;
    width: 115px;
    height: 25px;
    gap: 5px;
    border-radius: 3px;
    background-color: #ef6413;
    color: #fff;
    font-size: 9.100px;
    font-weight: 600;
}

.execute svg {
    width: 8px;
    stroke: #fff;
}

footer {
    height: 21px;
    flex: none;
    display: flex;
    align-items: center;
    padding: 0 8px 0 10px;
    border-top: 1px solid #2c2b2e;
    font-size: 8px;
    font-weight: 600;
}

.popout {
    width: 9px;
    height: 9px;
    margin-left: auto;
    margin-right: 9px;
}

.up {
    transform: scaleY(-1);
}

/* taskbar */
.taskbar {
    height: 27px;
    margin-top: 3px;
    flex: none;
    display: flex;
    align-items: center;
    background-color: #1c1a1e;
    font-family: "Open Sans", sans-serif;
}

.weather {
    position: relative;
    width: 158px;
    margin-left: 11px;
}

.weather svg {
    width: 16px;
    height: 16px;
    stroke: none;
}

.weather span {
    position: absolute;
    left: 7px;
    top: -2px;
    font-size: 6.500px;
    font-weight: 600;
    line-height: 7px;
}

.apps {
    display: flex;
    align-items: center;
    gap: 9.220px;
    margin-left: 2px;
}

.apps svg {
    width: 16px;
    height: 16px;
    stroke: none;
}

.running {
    position: relative;
}

.running::after {
    content: "";
    position: absolute;
    left: 6px;
    bottom: -4px;
    width: 4px;
    height: 2px;
    border-radius: 1px;
    background-color: #9c9b9f;
}

.edge {
    box-shadow: 0 0 0 4px #29272b;
    background-color: #29272b;
}

.edge::after {
    left: 3px;
    width: 10px;
    background-color: #c5d9e6;
}

.badge {
    position: absolute;
    right: -3px;
    top: -3px;
    width: 9px;
    height: 9px;
    border-radius: 50%;
    background-color: #a9b4c0;
    color: #26303a;
    font-size: 6px;
    line-height: 9px;
    text-align: center;
}

.tray {
    flex: 1;
    display: flex;
    align-items: center;
    padding-right: 11px;
    margin-left: 43px;
}

.cloud { margin-left: 9px; }
.wifi { margin-left: 8px; }
.sound { margin-left: 4px; }

.battery {
    width: 12px;
    margin-left: 4px;
    stroke: none;
}

.percent {
    margin-left: 1px;
    font-size: 6.800px;
}

.clock {
    margin-left: auto;
    font-size: 6.800px;
    line-height: 9px;
    text-align: right;
    white-space: nowrap;
}
```
